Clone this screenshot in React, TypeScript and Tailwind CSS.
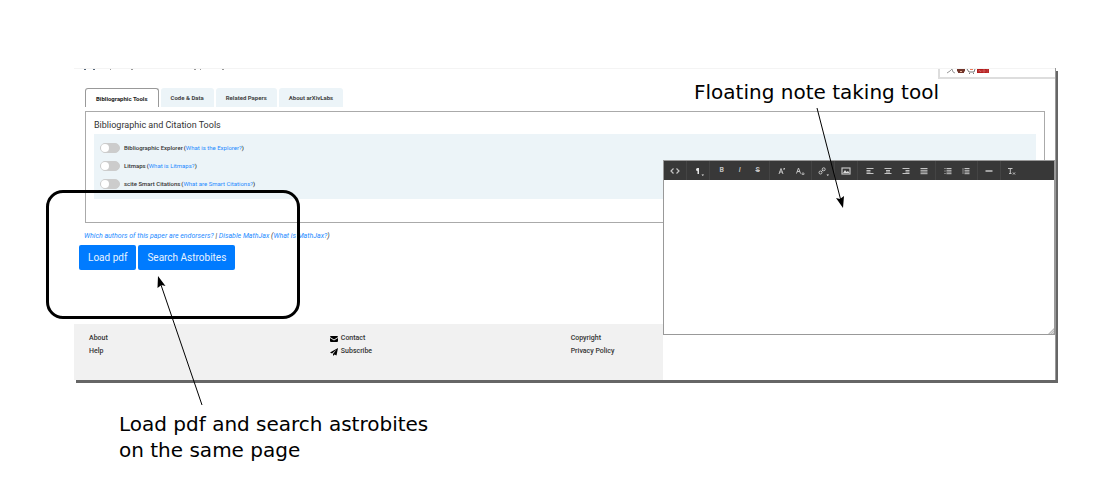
import type { ReactNode } from "react";

const tabs = ["Code & Data", "Related Papers", "About arXivLabs"];

const tools = [
  { id: "explorer", name: "Bibliographic Explorer", link: "What is the Explorer?" },
  { id: "litmaps", name: "Litmaps", link: "What is Litmaps?" },
  { id: "scite", name: "scite Smart Citations", link: "What are Smart Citations?" },
];

function Glyph({ children }: { children: ReactNode }) {
  return (
    <svg viewBox="0 0 12 12" className="size-3" fill="none" stroke="#c4c4c4" strokeWidth="1" aria-hidden="true">
      {children}
    </svg>
  );
}

const corner = <path d="M9.500 9.500h2.500l-1.200 1.500z" fill="#eee" stroke="none" />;

const groups: { label: string; icon: ReactNode }[][] = [
  [{ label: "HTML", icon: <Glyph><path d="M4.500 3.500L2 6l2.500 2.500M7.500 3.500L10 6 7.500 8.500" strokeWidth="1.200" /></Glyph> }],
  [{
    label: "Formatting",
    icon: <Glyph><path d="M4 4.500a1.500 1.500 0 0 1 1.500-1.500H7v6H5.500V6A1.500 1.500 0 0 1 4 4.500z" fill="#e5e5e5" stroke="none" />{corner}</Glyph>,
  }],
  [
    { label: "Bold", icon: <span className="text-[7px] font-bold">B</span> },
    { label: "Italic", icon: <span className="text-[7px] font-medium italic">I</span> },
    { label: "Strikethrough", icon: <span className="text-[7px] font-bold line-through">S</span> },
  ],
  [
    { label: "Superscript", icon: <Glyph><path d="M3 9l2-5.500L7 9M3.500 7h3M8 3v2M8 3.500h1" /></Glyph> },
    { label: "Subscript", icon: <Glyph><path d="M2.500 8.500L4.500 3l2 5.500M3 6.500h3" /><path d="M8 8h2v1.500H8z" strokeWidth=".7" /></Glyph> },
  ],
  [{
    label: "Link",
    icon: (
      <Glyph>
        <circle cx="3.500" cy="7.500" r="1.500" />
        <circle cx="6.700" cy="4.300" r="1.500" />
        <path d="M4 7l2.200-2.200" />
        {corner}
      </Glyph>
    ),
  }],
  [{
    label: "Image",
    icon: (
      <Glyph>
        <rect x="2" y="3" width="8" height="6" strokeWidth="1.200" />
        <path d="M3 8l2-3 1.500 2L8 6l1.500 2z" fill="#ddd" stroke="none" />
      </Glyph>
    ),
  }],
  [
    { label: "Align left", icon: <Glyph><path d="M2.500 3.500h7M2.500 5.500h4M2.500 7h4M2.500 8.500h7" /></Glyph> },
    { label: "Align center", icon: <Glyph><path d="M2.500 3.500h7M4 5.500h4M4 7h4M2.500 8.500h7" /></Glyph> },
    { label: "Align right", icon: <Glyph><path d="M2.500 3.500h7M5.500 5.500h4M5.500 7h4M2.500 8.500h7" /></Glyph> },
    { label: "Justify", icon: <Glyph><path d="M2.500 3.500h7M2.500 5.300h7M2.500 7h7M2.500 8.700h7" /></Glyph> },
  ],
  [
    { label: "Bulleted list", icon: <Glyph><path d="M2.500 3.500h1M2.500 6h1M2.500 8.500h1M4.500 3.500h5M4.500 5.300h5M4.500 7h5M4.500 8.700h5" /></Glyph> },
    { label: "Numbered list", icon: <Glyph><path d="M3 3v6" strokeWidth=".6" /><path d="M4.500 3.500h5M4.500 5.300h5M4.500 7h5M4.500 8.700h5" /></Glyph> },
  ],
  [{ label: "Horizontal rule", icon: <Glyph><path d="M2.500 6h7" strokeWidth="1.500" /></Glyph> }],
  [{ label: "Remove format", icon: <Glyph><path d="M2 3.500h4.500M4.300 3.500v5M3 8.500h2.500M7 7.500l2 2M9 7.500l-2 2" /></Glyph> }],
];

function Toolbar() {
  return (
    <div role="toolbar" aria-label="Note formatting" className="flex h-[19px] shrink-0 bg-[#383838] text-[#c4c4c4]">
      {groups.map((group, i) => (
        <div
          key={i}
          className={`flex shrink-0 border-r border-[#444] pr-[2px] last:border-r-0 ${group.length > 1 ? "pl-[3px]" : "pl-[2px]"}`}
        >
          {group.map((item) => (
            <button key={item.label} type="button" aria-label={item.label} className="flex w-[18px] items-center justify-center">
              {item.icon}
            </button>
          ))}
        </div>
      ))}
    </div>
  );
}

function NoteTool() {
  return (
    <section aria-label="Notes" className="absolute top-[92px] right-0 flex h-[175px] w-2/5 flex-col border border-[#999] bg-white">
      <Toolbar />
      <textarea aria-label="Note text" className="w-full flex-1 resize-none p-2 text-xs outline-none" />
      <svg viewBox="0 0 6 6" className="absolute right-0 bottom-0 size-[6px]" aria-hidden="true">
        <path d="M6 0v6H0z" fill="#bbb" />
        <path d="M2 6l4-4M4 6l2-2" stroke="#eee" strokeWidth=".6" />
      </svg>
    </section>
  );
}

function TopStrip() {
  return (
    <div className="flex h-5 items-start justify-between border-t border-[#f4f4f4]">
      <svg viewBox="0 0 150 2" className="ml-[10px] h-[2px] w-[150px]" aria-hidden="true">
        <path d="M0 0h2v1H0zM9 0h2v1H9z" fill="#567" />
        <path d="M26 0h1v1h-1zM47 0h2v1h-2zM110 0h2v1h-2zM116 0h1v1h-1zM138 0h2v1h-2z" fill="#999" />
      </svg>
      <div className="h-[10px] w-[117px] border-b-2 border-l-2 border-[#ddd] pl-[7px]">
        <svg viewBox="0 0 44 5" className="h-[5px] w-11" aria-hidden="true">
          <path d="M0 4l3-2 2-2 1 3 2 1" stroke="#999" fill="none" />
          <path d="M10 0h8v2l-1 1v1h-6V3l-1-1z" fill="#72352b" />
          <path d="M13 2h2v1h-2z" fill="#e9b59a" />
          <path d="M20 0l2 3h5l1-3M22 4.500h1M26 4.500h1" stroke="#777" fill="none" />
          <path d="M23 0h3v1h-3z" fill="#e87b5a" />
          <path d="M30 0h12v4H30z" fill="#b31b1b" />
          <path d="M32 3V1l2 2V1M36 1v2h2V1zM39.500 1h2M39.500 3h2" stroke="#e9a4a4" strokeWidth=".4" fill="none" />
        </svg>
      </div>
    </div>
  );
}

function Tabs() {
  return (
    <div role="tablist" className="ml-[11px] flex h-[19px] gap-[2px] text-[6px] font-bold">
      <button role="tab" aria-selected="true" className="rounded-t-[3px] border border-b-0 border-[#999] px-[10px] text-[#222]">
        Bibliographic Tools
      </button>
      {tabs.map((tab) => (
        <button key={tab} role="tab" aria-selected="false" className="rounded-t-[3px] bg-[#ecf4f8] px-[10px] text-[#444]">
          {tab}
        </button>
      ))}
    </div>
  );
}

function ToolsPanel() {
  return (
    <section className="mt-1 mr-[10px] ml-[11px] h-[112px] border border-[#aaa] px-2">
      <h2 className="flex h-[22px] items-center pt-[6px] text-[9px] text-[#333]">Bibliographic and Citation Tools</h2>
      <ul className="flex h-[65px] flex-col gap-px bg-[#ecf4f8] px-[6px] pt-[5px] text-[6px] text-[#333]">
        {tools.map((tool) => (
          <li key={tool.id} className="flex h-[17px] items-center">
            <input
              id={tool.id}
              type="checkbox"
              className="mr-1 h-[10px] w-5 appearance-none rounded-full border border-[#ccc] bg-[#ccc] before:block before:size-2 before:rounded-full before:bg-white checked:bg-[#007bff] checked:before:ml-[10px]"
            />
            <label htmlFor={tool.id} className="font-medium">{tool.name}</label>
            <span className="ml-px font-medium">
              (<a href="#" className="font-normal text-[#1e8bff]">{tool.link}</a>)
            </span>
          </li>
        ))}
      </ul>
    </section>
  );
}

function Footer() {
  return (
    <footer className="mt-[54px] grid h-14 w-3/5 grid-cols-[241fr_241fr_92fr] bg-[#f1f1f1] pt-[8px] pl-[15px] text-[7px] leading-[13px] font-medium text-[#333]">
      <div className="flex flex-col">
        <a href="#">About</a>
        <a href="#">Help</a>
      </div>
      <div className="flex flex-col">
        <a href="#" className="flex items-center gap-[3px]">
          <svg viewBox="0 0 16 12" className="h-[6px] w-2" fill="#000" aria-hidden="true">
            <path d="M2 0h12a2 2 0 0 1 2 2L8 7 0 2a2 2 0 0 1 2-2zM0 4l8 5 8-5v6a2 2 0 0 1-2 2H2a2 2 0 0 1-2-2z" />
          </svg>
          Contact
        </a>
        <a href="#" className="flex items-center gap-[3px]">
          <svg viewBox="0 0 16 16" className="size-2" fill="#000" aria-hidden="true">
            <path d="M16 0L0 9l4 2 9-8-7 9v4l3-3 4 2z" />
          </svg>
          Subscribe
        </a>
      </div>
      <div className="flex flex-col">
        <a href="#">Copyright</a>
        <a href="#">Privacy Policy</a>
      </div>
    </footer>
  );
}

export default function App() {
  return (
    <main className="relative min-h-screen bg-white pt-[68px] pr-[46px] pb-5 pl-[74px] font-['Roboto',sans-serif] text-black">
      <div className="relative border-r border-[#999] bg-white shadow-[2px_3px_0_#666]">
        <TopStrip />
        <Tabs />
        <ToolsPanel />
        <p className="mt-2 ml-[10px] text-[7px] leading-[10px] text-[#333] italic">
          <a href="#" className="text-[#1e8bff]">Which authors of this paper are endorsers?</a> |{" "}
          <a href="#" className="text-[#1e8bff]">Disable MathJax</a> (
          <a href="#" className="text-[#1e8bff]">What is MathJax?</a>)
        </p>
        <div className="mt-1 ml-[5px] flex gap-[2px] text-[10px] text-[#e8f3ff]">
          <button type="button" className="h-[25px] rounded-[2px] bg-[#007bff] px-[9px]">Load pdf</button>
          <button type="button" className="h-[25px] rounded-[2px] bg-[#007bff] px-[9px]">Search Astrobites</button>
        </div>
        <Footer />
        <NoteTool />
      </div>

      <p className="mt-[31px] ml-[45px] font-['DejaVu_Sans',sans-serif] text-[20px] leading-[26px]">
        Load pdf and search astrobites
        <br />
        on the same page
      </p>
      <p className="absolute top-[79px] right-[163px] font-['DejaVu_Sans',sans-serif] text-[20px] leading-[26px]">
        Floating note taking tool
      </p>
      <div className="pointer-events-none absolute top-[190px] left-[46px] h-[129px] w-[254px] rounded-[17px] border-3 border-black" />
      <svg viewBox="0 0 50 132" className="pointer-events-none absolute top-[275px] left-[155px] h-[132px] w-[50px]" aria-hidden="true">
        <path d="M5 7L47 130" stroke="#000" fill="none" />
        <path d="M3 1l7.500 10-4-1-4 3z" />
      </svg>
      <svg viewBox="0 0 34 104" className="pointer-events-none absolute top-[106px] right-[254px] h-[104px] w-[34px]" aria-hidden="true">
        <path d="M3 2L27 95" stroke="#000" fill="none" />
        <path d="M29 102l-7-10 4 1 4-3z" />
      </svg>
    </main>
  );
}
